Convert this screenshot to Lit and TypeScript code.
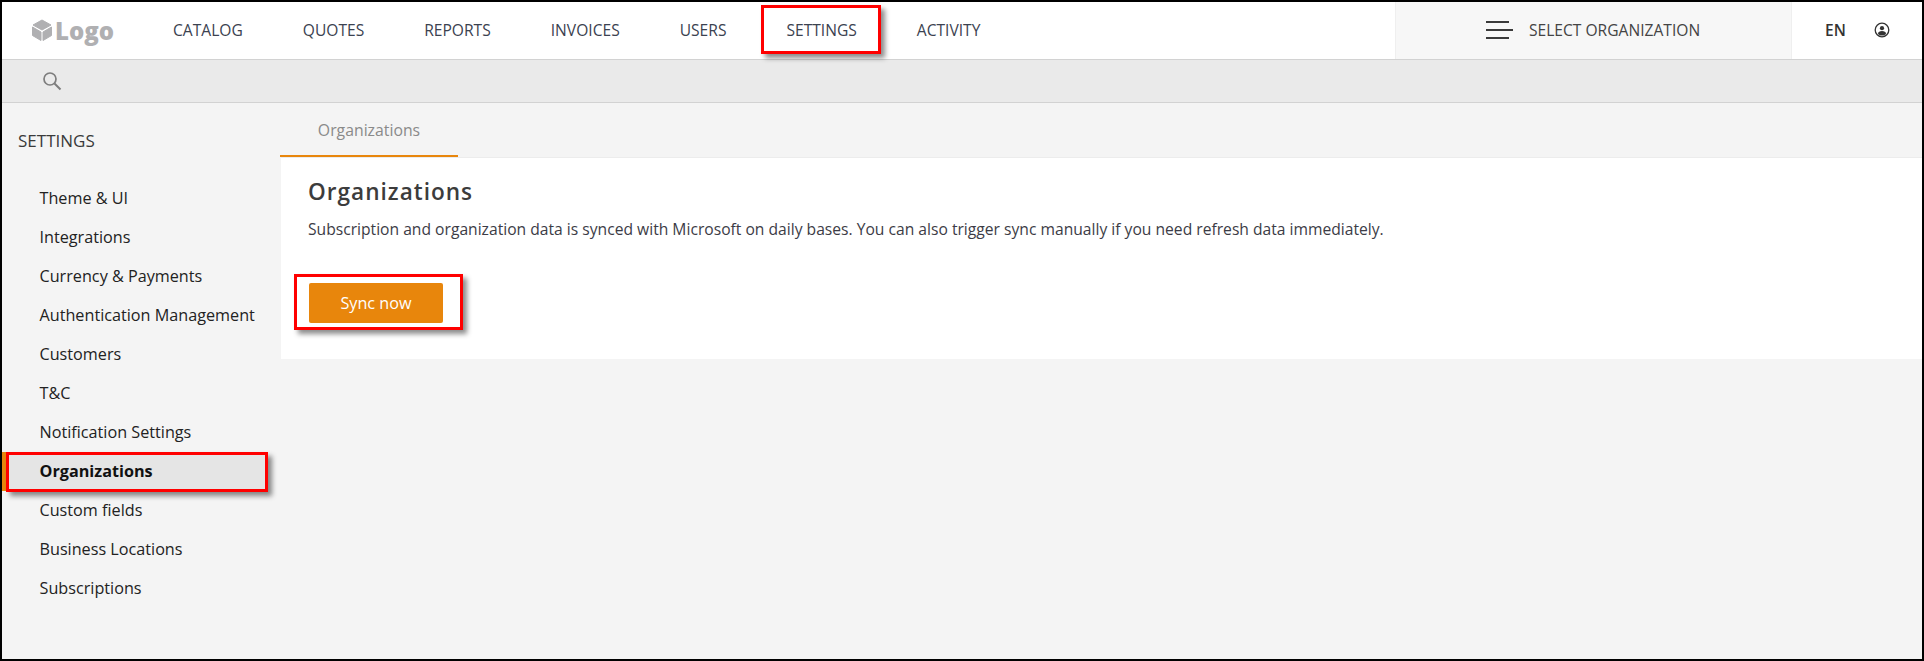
import { LitElement, html, css } from "lit";
import { customElement } from "lit/decorators.js";

const NAV = ["CATALOG", "QUOTES", "REPORTS", "INVOICES", "USERS", "SETTINGS", "ACTIVITY"];
const SIDE = ["Theme & UI", "Integrations", "Currency & Payments", "Authentication Management", "Customers", "T&C", "Notification Settings", "Organizations", "Custom fields", "Business Locations", "Subscriptions"];

@customElement("app-root")
export class AppRoot extends LitElement {
  static styles = css`
    :host { display: block; width: 1924px; height: 661px; font-family: "Open Sans", sans-serif; color: #3a3a3a; }
    * { box-sizing: border-box; }
    .frame { position: relative; width: 1924px; height: 661px; border: 2px solid #000; background: #f4f4f4; display: flex; flex-direction: column; overflow: hidden; }
    .top { height: 58px; flex: none; display: flex; align-items: stretch; background: #fff; border-bottom: 1px solid #d2d2d2; }
    .logo { width: 141px; padding-left: 29px; display: flex; align-items: center; gap: 2px; color: #b0b0b2; font-weight: 800; font-size: 24px; }
    .logo svg { display: block; }
    .nav { display: flex; align-items: center; padding-bottom: 2px; font-size: 15.6px; color: #3b4250; }
    .nav span { padding: 0 30px; }
    .org { margin-left: auto; width: 397px; display: flex; align-items: center; padding-left: 90px; padding-bottom: 2px; gap: 16px; background: #f7f7f7; border-left: 1px solid #efefef; border-right: 1px solid #efefef; font-size: 15.6px; color: #444; }
    .right { width: 130px; display: flex; align-items: center; padding-left: 33px; padding-bottom: 2px; gap: 28px; font-size: 15.5px; font-weight: 600; color: #333; }
    .sub { height: 43px; flex: none; background: #eaeaea; border-bottom: 1px solid #d2d2d2; display: flex; align-items: center; padding-left: 40px; }
    .main { flex: 1; display: flex; min-height: 0; }
    .side { width: 278px; flex: none; }
    .side h2 { margin: 0; padding: 28px 0 0 16px; height: 75px; font-size: 17px; font-weight: 400; line-height: 20px; color: #3a3a3a; }
    .side ul { margin: 0; padding: 0; width: 264px; list-style: none; }
    .side li { height: 39.1px; display: flex; align-items: center; padding-left: 37.5px; font-size: 16.2px; color: #222; white-space: nowrap; }
    .side li.on { background: #e5e5e5; font-weight: 700; color: #111; border-left: 4px solid #e8860c; padding-left: 33.5px; }
    .content { flex: 1; display: flex; flex-direction: column; min-width: 0; }
    .tabs { height: 54px; flex: none; display: flex; }
    .tab { width: 178px; height: 54px; border-bottom: 2px solid #e8860c; text-align: center; font-size: 15.8px; line-height: 54px; color: #8a8a8a; }
    .card { height: 202px; background: #fff; margin-left: 1px; border-top: 1px solid #ececec; padding: 19px 0 0 28px; }
    .card h1 { margin: 0 0 0 -1px; font-size: 22.6px; line-height: 30px; font-weight: 600; letter-spacing: 1px; color: #3c3c3c; }
    .card p { margin: 12px 0 0 -1px; font-size: 15.65px; line-height: 20px; color: #3c3c46; }
    .btn { margin-top: 44px; width: 134px; height: 40px; display: flex; align-items: center; justify-content: center; background: #e8860c; border-radius: 2px; color: #fff; font-size: 16.2px; }
    .mark { position: absolute; border: 3px solid #f00; box-shadow: 4px 4px 5px rgba(0,0,0,.45); }
    .m1 { left: 759px; top: 3px; width: 120px; height: 49px; }
    .m2 { left: 4px; top: 450px; width: 262px; height: 40px; }
    .m3 { left: 292px; top: 272px; width: 169px; height: 56px; }
  `;

  render() {
    return html`<div class="frame">
      <header class="top">
        <div class="logo">
          <svg width="22" height="23" viewBox="0 0 22 23"><path fill="#b0b0b2" stroke="#b0b0b2" stroke-linejoin="round" d="M11 1 2 6 11 11 20 6Z"/><path fill="#b0b0b2" stroke="#b0b0b2" stroke-linejoin="round" d="M1.5 8v8.5l8.5 5V13Z"/><path fill="#b0b0b2" stroke="#b0b0b2" stroke-linejoin="round" d="M20.5 8v8.5l-8.5 5V13Z"/></svg>
          <span>Logo</span>
        </div>
        <nav class="nav">${NAV.map((n) => html`<span>${n}</span>`)}</nav>
        <div class="org">
          <svg width="27" height="20" viewBox="0 0 27 20"><path fill="#3a3a3a" d="M0 1h23v2H0zM0 9h27v2H0zM0 17h23v2H0z"/></svg>
          <span>SELECT ORGANIZATION</span>
        </div>
        <div class="right">
          <span>EN</span>
          <svg width="16" height="16" viewBox="0 0 16 16"><circle cx="8" cy="8" r="6.8" fill="none" stroke="#333" stroke-width="1.3"/><circle cx="8" cy="6.2" r="2.1" fill="#333"/><path fill="#333" d="M4 12c0-2.2 1.8-3 4-3s4 .8 4 3a6 6 0 0 1-8 0Z"/></svg>
        </div>
      </header>
      <div class="sub">
        <svg width="20" height="20" viewBox="0 0 20 20"><circle cx="8" cy="8" r="6" fill="none" stroke="#7d7d7d" stroke-width="1.7"/><path stroke="#7d7d7d" stroke-width="2" d="m12.5 12.5 6 6"/></svg>
      </div>
      <div class="main">
        <aside class="side">
          <h2>SETTINGS</h2>
          <ul>${SIDE.map((s) => html`<li class=${s === "Organizations" ? "on" : ""}>${s}</li>`)}</ul>
        </aside>
        <section class="content">
          <div class="tabs"><div class="tab">Organizations</div></div>
          <div class="card">
            <h1>Organizations</h1>
            <p>Subscription and organization data is synced with Microsoft on daily bases. You can also trigger sync manually if you need refresh data immediately.</p>
            <div class="btn">Sync now</div>
          </div>
        </section>
      </div>
      <div class="mark m1"></div>
      <div class="mark m2"></div>
      <div class="mark m3"></div>
    </div>`;
  }
}
